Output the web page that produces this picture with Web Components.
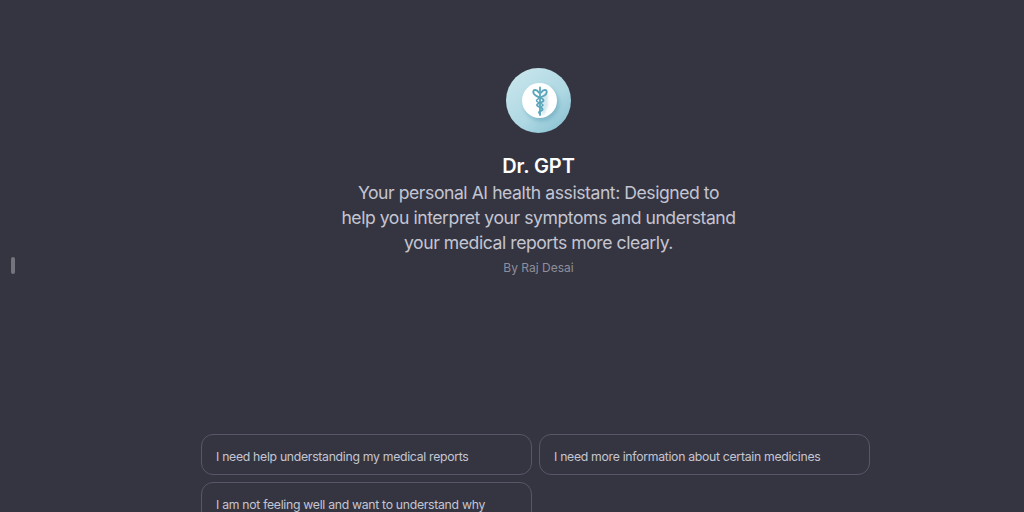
<!doctype html>
<html>
<head>
<meta charset="utf-8">
<title>Dr. GPT</title>
<style>
	html, body { margin: 0; background: #343541; }
	body { width: 1024px; height: 512px; overflow: hidden; font-family: Inter, "Liberation Sans", sans-serif; }
</style>
</head>
<body>
<gpt-page>
	<gpt-hero name="Dr. GPT" author="By Raj Desai">Your personal AI health assistant: Designed to help you interpret your symptoms and understand your medical reports more clearly.</gpt-hero>
	<starter-grid>
		<starter-button>I need help understanding my medical reports</starter-button>
		<starter-button>I need more information about certain medicines</starter-button>
		<starter-button>I am not feeling well and want to understand why</starter-button>
	</starter-grid>
	<side-handle></side-handle>
</gpt-page>

<script>
class GptPage extends HTMLElement {
	constructor() {
		super()
		this.attachShadow({mode: 'open'}).innerHTML = `
		<style>
			:host {
				display: flex;
				flex-direction: column;
				position: relative;
				width: 1024px;
				height: 512px;
				overflow: hidden;
				background: #343541;
				padding-top: 68px;
				box-sizing: border-box;
			}
		</style>
		<slot></slot>`
	}
}

class GptLogo extends HTMLElement {
	constructor() {
		super()
		this.attachShadow({mode: 'open'}).innerHTML = `
		<style>
			:host { display: block; width: 65px; height: 65px; }
			svg { display: block; }
		</style>
		<svg width="65" height="65" viewBox="0 0 65 65">
			<defs>
				<linearGradient id="disc" x1="0.15" y1="0.1" x2="0.85" y2="0.95">
					<stop offset="0" stop-color="#c6e4eb"/>
					<stop offset="0.6" stop-color="#aed8e3"/>
					<stop offset="1" stop-color="#8cc3d3"/>
				</linearGradient>
				<filter id="soft" x="-40%" y="-40%" width="180%" height="180%"><feGaussianBlur stdDeviation="2"/></filter>
				<filter id="softer" x="-40%" y="-40%" width="180%" height="180%"><feGaussianBlur stdDeviation=".9"/></filter>
				<clipPath id="inner"><circle cx="33.5" cy="32.5" r="17.5"/></clipPath>
			</defs>
			<circle cx="32.5" cy="32.5" r="32.5" fill="url(#disc)"/>
			<circle cx="35.5" cy="35.5" r="17.5" fill="#5f9fb6" opacity=".55" filter="url(#soft)"/>
			<circle cx="33.5" cy="32.5" r="17.5" fill="#fff"/>
			<g clip-path="url(#inner)">
				<path d="M37 24 L42 26 L42 38 L38 47 L36 47 Z" fill="#c4dfe7" opacity=".75" filter="url(#softer)"/>
			</g>
			<g fill="none" stroke="#5ba6bc" stroke-linecap="round">
				<path d="M34 19.5 V47" stroke-width="1.8"/>
				<path d="M32.8 24.5 C30.8 21 26.5 21.2 27.4 24.8 C28 27.4 31 28.6 34.5 29.8 C38.5 31.2 38.5 33.4 34.5 34.6 C30 36 30 38 33.8 39.2 C37.5 40.4 37.5 42 34.6 43 C32.5 43.8 32.5 44.8 34 45.5" stroke-width="1.9"/>
				<path d="M35.2 24.5 C37.2 21 41.5 21.2 40.6 24.8 C40 27.2 37.5 28.2 35.5 28.8" stroke-width="1.9"/>
				<path d="M32.6 30.6 C29.8 31.8 29.8 33.4 32.6 34.4 M35.2 35.6 C37.6 36.6 37.6 37.6 35.4 38.4" stroke-width="1.5"/>
			</g>
		</svg>`
	}
}

class GptHero extends HTMLElement {
	constructor() {
		super()
		this.attachShadow({mode: 'open'}).innerHTML = `
		<style>
			:host {
				display: flex;
				flex-direction: column;
				align-items: center;
				padding-left: 53px;
				text-align: center;
			}
			#name {
				margin-top: 20px;
				color: #fff;
				font-size: 20px;
				line-height: 26px;
				font-weight: 600;
				letter-spacing: -.1px;
			}
			#description {
				width: 397px;
				margin-top: 1px;
				color: #c5c5d2;
				font-size: 17.6px;
				line-height: 25px;
				letter-spacing: -.45px;
			}
			#author {
				margin-top: 3px;
				color: #8e8e9c;
				font-size: 12px;
				line-height: 20px;
			}
		</style>
		<gpt-logo></gpt-logo>
		<div id="name"></div>
		<div id="description"><slot></slot></div>
		<div id="author"></div>`
		this.shadowRoot.querySelector('#name').innerText = this.getAttribute('name')
		this.shadowRoot.querySelector('#author').innerText = this.getAttribute('author')
	}
}

class StarterGrid extends HTMLElement {
	constructor() {
		super()
		this.attachShadow({mode: 'open'}).innerHTML = `
		<style>
			:host {
				display: grid;
				grid-template-columns: 331px 331px;
				gap: 7px;
				margin: 156px 0 0 200.5px;
			}
		</style>
		<slot></slot>`
	}
}

class StarterButton extends HTMLElement {
	constructor() {
		super()
		this.attachShadow({mode: 'open'}).innerHTML = `
		<style>
			:host {
				display: block;
				box-sizing: border-box;
				height: 41px;
				padding: 0 14.5px;
				border: 1px solid #565869;
				border-radius: 12px;
				color: #c5c5d2;
				font-size: 12.25px;
				letter-spacing: -.3px;
				line-height: 43px;
				white-space: nowrap;
			}
		</style>
		<slot></slot>`
	}
}

class SideHandle extends HTMLElement {
	constructor() {
		super()
		this.attachShadow({mode: 'open'}).innerHTML = `
		<style>
			:host {
				position: absolute;
				left: 11px;
				top: 257px;
				width: 4px;
				height: 17px;
				border-radius: 2px;
				background: #74747f;
			}
		</style>`
	}
}

customElements.define('gpt-page', GptPage)
customElements.define('gpt-logo', GptLogo)
customElements.define('gpt-hero', GptHero)
customElements.define('starter-grid', StarterGrid)
customElements.define('starter-button', StarterButton)
customElements.define('side-handle', SideHandle)
</script>
</body>
</html>
